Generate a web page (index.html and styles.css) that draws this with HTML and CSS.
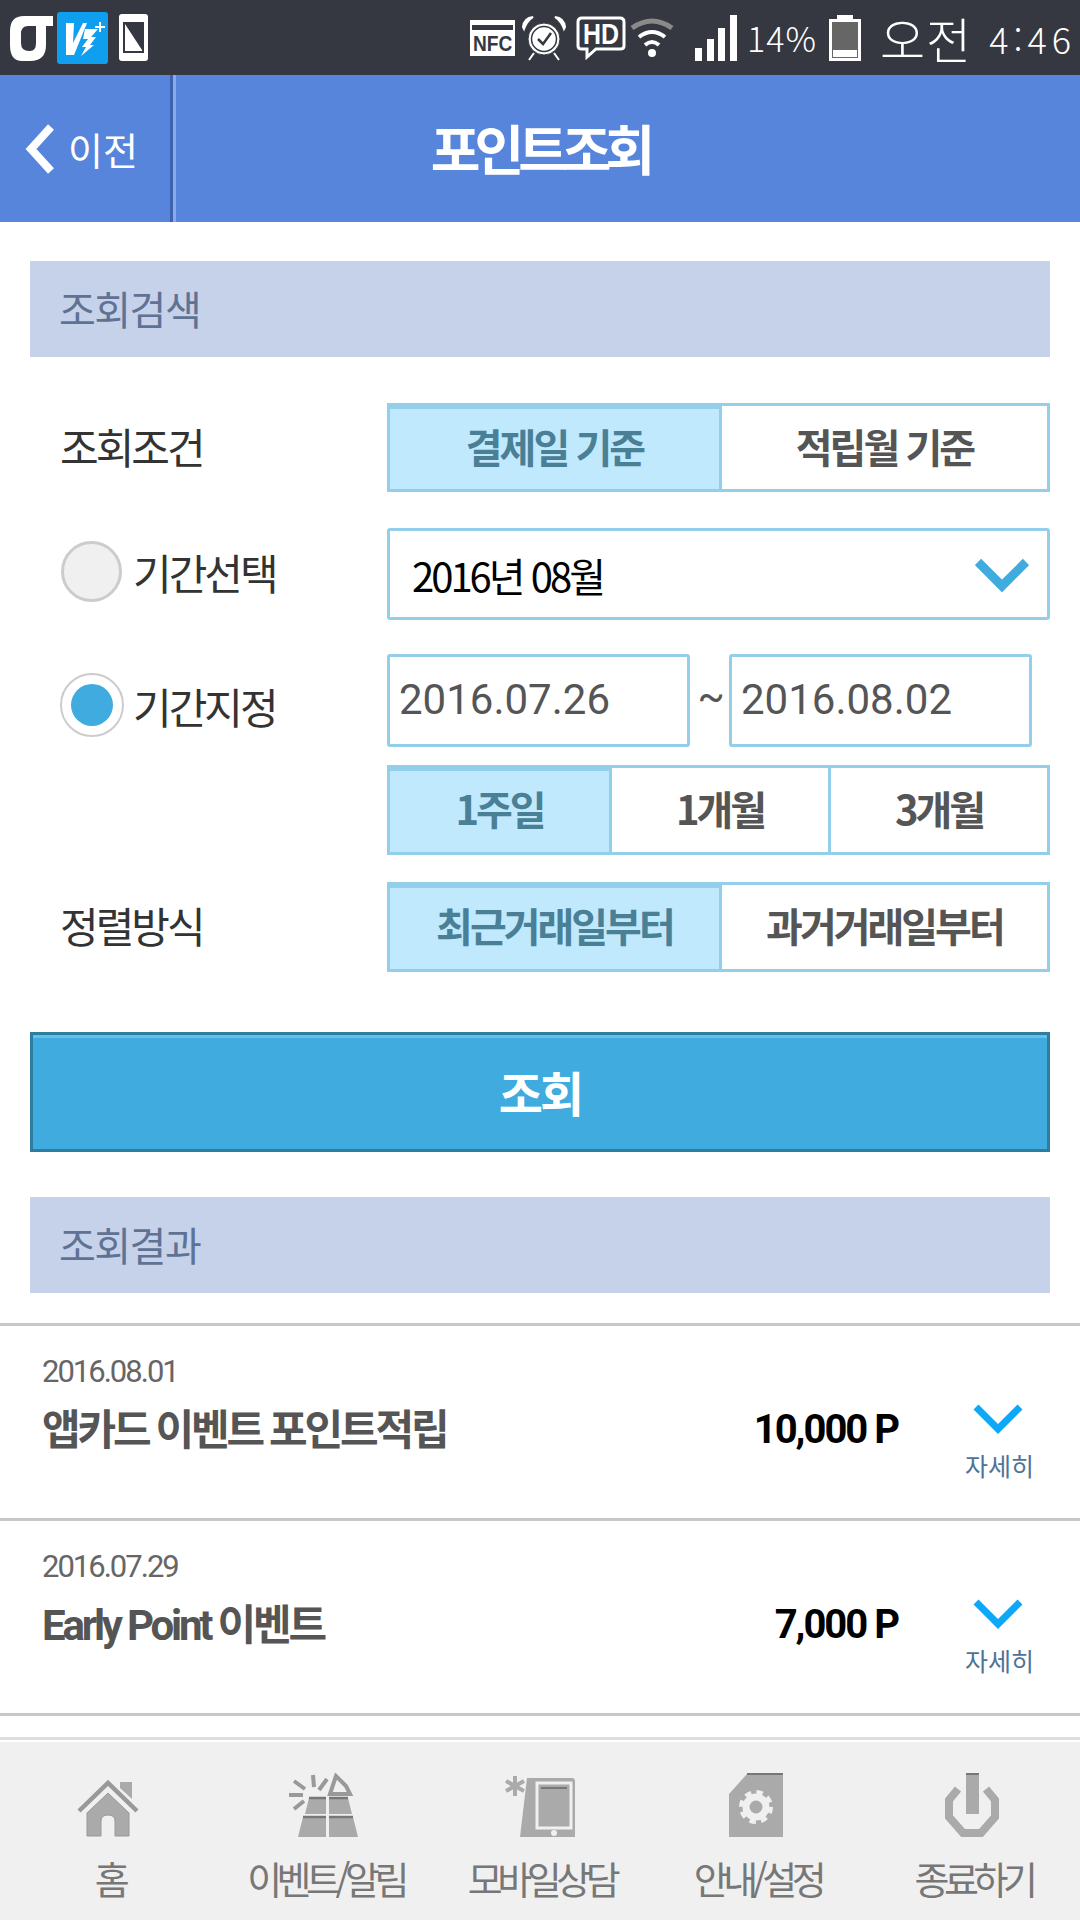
FILE: index.html
```html
<!DOCTYPE html>
<html lang="ko">
<head>
<meta charset="utf-8">
<title>포인트조회</title>
<link rel="stylesheet" href="styles.css">
</head>
<body>
<div class="page">
  <div class="status">
    <div class="status-left">
      <svg class="i-g" viewBox="0 0 43 46"><path fill="#fff" fill-rule="evenodd" d="M14 1H43V11H36V30Q36 46 20 46H12Q0 46 0 30V16Q0 1 14 1ZM18 11Q11 11 11 19V28Q11 36 19 36H20Q26 36 26 28V11Z"/></svg>
      <svg class="i-v" viewBox="0 0 51 52"><rect width="51" height="52" rx="3" fill="#109fee"/><path fill="#fff" d="M9 11H17L16 31L26 11H30L17 43H9Z"/><path fill="#fff" d="M28 17H41L34 25H39L33 33H37L24 44L29 35H25L31 27H26Z"/><path stroke="#fff" stroke-width="2" d="M38 15H48M43 10V20"/></svg>
      <svg class="i-phone" viewBox="0 0 29 47"><rect width="29" height="47" rx="3" fill="#fff"/><rect x="4" y="8" width="21" height="31" fill="#353841"/><path fill="#fff" d="M6 10L23 36V37H6Z"/></svg>
    </div>
    <div class="status-right">
      <svg class="i-nfc" viewBox="0 0 45 36"><rect width="45" height="36" fill="#fff"/><rect x="2" y="5" width="41" height="5" fill="#353841"/><text transform="translate(3 30.5) scale(.87 1)" class="nfc-text">NFC</text></svg>
      <svg class="i-alarm" viewBox="0 0 46 46"><circle cx="23" cy="24" r="16" fill="#fff" stroke="#353841" stroke-width="1"/><circle cx="23" cy="24" r="12.5" fill="#fff" stroke="#353841" stroke-width="1.5"/><path d="M17 24L22 29L30 18" fill="none" stroke="#353841" stroke-width="2.5"/><path d="M2 12Q3 3 12 2Q6 6 3 14Z M44 12Q43 3 34 2Q40 6 43 14Z" fill="#fff" stroke="#fff" stroke-width="2"/><path d="M13 38L8 45M33 38L38 45" stroke="#fff" stroke-width="2"/></svg>
      <svg class="i-hd" viewBox="0 0 50 44"><path d="M6 2H44Q48 2 48 6V30Q48 33 44 33H20L11 41V33H6Q2 33 2 30V6Q2 2 6 2Z" fill="none" stroke="#fff" stroke-width="3"/><text x="7" y="28" textLength="36" lengthAdjust="spacingAndGlyphs" class="hd-text">HD</text></svg>
      <svg class="i-wifi" viewBox="0 0 44 40"><path d="M2 10Q22 -4 42 10" fill="none" stroke="#8a8a8a" stroke-width="5"/><path d="M9 19Q22 9 35 19M15 27Q22 21 29 27" fill="none" stroke="#fff" stroke-width="4"/><circle cx="22" cy="35" r="4" fill="#fff"/></svg>
      <svg class="i-signal" viewBox="0 0 42 46"><path fill="#fff" d="M0 33H7V46H0ZM12 24H19V46H12ZM23 13H30V46H23ZM35 0H42V46H35Z"/></svg>
      <span class="pct">14%</span>
      <svg class="i-batt" viewBox="0 0 32 46"><path fill="#fff" d="M8 0H24V4H32V46H0V4H8Z"/><rect x="3" y="7" width="26" height="36" fill="#666"/><rect x="4" y="35" width="24" height="7" fill="#fff"/></svg>
      <span class="ampm">오전</span>
      <span class="clock">4:46</span>
    </div>
  </div>

  <header class="topbar">
    <div class="back">
      <svg class="i-back" viewBox="0 0 30 50"><path d="M26 3L6 25L26 47" fill="none" stroke="#fff" stroke-width="8"/></svg>
      <span>이전</span>
    </div>
    <h1 class="title">포인트조회</h1>
  </header>

  <main class="content">
    <div class="bar bar-search">조회검색</div>

    <div class="form-row row-cond">
      <div class="label">조회조건</div>
      <div class="seg">
        <div class="cell on grow-272">결제일 기준</div>
        <div class="cell grow-269">적립월 기준</div>
      </div>
    </div>

    <div class="form-row row-select">
      <div class="label with-radio"><span class="radio"></span>기간선택</div>
      <div class="select">
        <span class="select-value">2016년 08월</span>
        <svg class="i-sel" viewBox="0 0 54 35"><path d="M3 5L27 29L51 5" fill="none" stroke="#3fabde" stroke-width="9"/></svg>
      </div>
    </div>

    <div class="form-row row-date">
      <div class="label with-radio"><span class="radio active"><span class="dot"></span></span>기간지정</div>
      <div class="dates">
        <div class="date">2016.07.26</div>
        <div class="tilde">~</div>
        <div class="date">2016.08.02</div>
      </div>
    </div>

    <div class="form-row row-period">
      <div class="label"></div>
      <div class="seg">
        <div class="cell on">1주일</div>
        <div class="cell">1개월</div>
        <div class="cell">3개월</div>
      </div>
    </div>

    <div class="form-row row-sort">
      <div class="label">정렬방식</div>
      <div class="seg">
        <div class="cell on grow-272">최근거래일부터</div>
        <div class="cell grow-269">과거거래일부터</div>
      </div>
    </div>

    <button class="submit">조회</button>

    <div class="bar bar-result">조회결과</div>
  </main>

  <ul class="list">
    <li class="item">
      <div class="item-text">
        <div class="item-date">2016.08.01</div>
        <div class="item-name">앱카드 이벤트 포인트적립</div>
      </div>
      <div class="item-amount">10,000 P</div>
      <div class="more">
        <svg class="i-more" viewBox="0 0 50 31"><path d="M3 3L25 25L47 3" fill="none" stroke="#0ea8f8" stroke-width="7"/></svg>
        <span>자세히</span>
      </div>
    </li>
    <li class="item">
      <div class="item-text">
        <div class="item-date">2016.07.29</div>
        <div class="item-name">Early Point 이벤트</div>
      </div>
      <div class="item-amount">7,000 P</div>
      <div class="more">
        <svg class="i-more" viewBox="0 0 50 31"><path d="M3 3L25 25L47 3" fill="none" stroke="#0ea8f8" stroke-width="7"/></svg>
        <span>자세히</span>
      </div>
    </li>
  </ul>

  <nav class="tabs">
    <div class="tab">
      <svg class="tab-icon" viewBox="0 0 72 66"><path fill="#aaa" d="M48 9H60V26L48 15Z"/><path d="M7 38L36 10L65 38" fill="none" stroke="#999" stroke-width="4.5"/><path fill="#aaa" stroke="#999" d="M15 40L36 20L57 40V63H43V48Q43 42 36 42Q29 42 29 48V63H15Z"/></svg>
      <span class="tab-label">홈</span>
    </div>
    <div class="tab">
      <svg class="tab-icon" viewBox="0 0 72 66"><path fill="#aaa" d="M21 25H38V41H17ZM41 25H60L64 41H41ZM15 44H38V64H10ZM41 44H65L70 64H41Z"/><path d="M21 25H38M41 25H60M15 44H38M41 44H65" stroke="#777" stroke-width="2.5"/><path d="M25 2L26 14M6 8L17 16M1 22H15M6 36L16 28M39 6L31 17" stroke="#999" stroke-width="4"/><path d="M48 3L42 21H62L58 13Z" fill="none" stroke="#999" stroke-width="4"/></svg>
      <span class="tab-label">이벤트/알림</span>
    </div>
    <div class="tab">
      <svg class="tab-icon" viewBox="0 0 72 66"><path fill="#aaa" d="M23 5H68Q71 5 71 8V64H16Z"/><rect x="33" y="10" width="34" height="45" fill="none" stroke="#f0f0f0" stroke-width="3"/><rect x="37" y="14" width="26" height="37" fill="#aaa"/><path d="M37 15H63" stroke="#777" stroke-width="2"/><circle cx="50" cy="60" r="3" fill="#f0f0f0"/><path d="M11 3V23M2 8L20 18M20 8L2 18" stroke="#aaa" stroke-width="4"/></svg>
      <span class="tab-label">모바일상담</span>
    </div>
    <div class="tab">
      <svg class="tab-icon" viewBox="0 0 72 66"><path fill="#aaa" d="M27 1H63V64H9V21Z"/><path d="M27 1H63" stroke="#777" stroke-width="2"/><circle cx="36" cy="34" r="14" fill="none" stroke="#f0f0f0" stroke-width="6" stroke-dasharray="6 5"/><circle cx="36" cy="34" r="10" fill="#aaa" stroke="#f0f0f0" stroke-width="7"/></svg>
      <span class="tab-label">안내/설정</span>
    </div>
    <div class="tab">
      <svg class="tab-icon" viewBox="0 0 72 66"><path d="M22 16L13 27V44L27 60H45L59 44V27L50 16" fill="none" stroke="#aaa" stroke-width="8"/><rect x="30" y="0" width="13" height="41" fill="#aaa"/><path d="M30 1H43" stroke="#777" stroke-width="2"/></svg>
      <span class="tab-label">종료하기</span>
    </div>
  </nav>
</div>
</body>
</html>
```
FILE: styles.css
```css
* { box-sizing: border-box; }
html, body { margin: 0; padding: 0; }
body { font-family: "Noto Sans CJK KR", "Noto Sans", sans-serif; background: #fff; }
.page { width: 1080px; height: 1920px; display: flex; flex-direction: column; overflow: hidden; background: #fff; }

.status { height: 75px; flex: none; background: #353841; display: flex; justify-content: space-between; align-items: center; color: #fff; padding: 0 4px 0 10px; }
.status-left, .status-right { display: flex; align-items: center; }
.i-g { width: 43px; height: 46px; }
.i-v { width: 51px; height: 52px; margin-left: 4px; }
.i-phone { width: 31px; height: 47px; margin-left: 10px; }
.i-nfc { width: 45px; height: 36px; }
.i-alarm { width: 46px; height: 46px; margin-left: 6px; }
.i-hd { width: 50px; height: 44px; margin-left: 9px; }
.i-wifi { width: 44px; height: 40px; margin-left: 4px; }
.i-signal { width: 42px; height: 46px; margin-left: 21px; }
.i-batt { width: 32px; height: 46px; margin-left: 16px; }
.nfc-text { font: 700 22px "Liberation Sans", sans-serif; fill: #353841; }
.hd-text { font: 700 30px "Liberation Sans", sans-serif; fill: #fff; }
.pct { font: 300 34px "Noto Sans CJK KR", sans-serif; margin-left: 10px; letter-spacing: 1px; width: 66px; }
.ampm { font: 300 49px "Noto Sans CJK KR", sans-serif; margin-left: 19px; letter-spacing: 1px; }
.clock { font: 300 36px "Noto Sans CJK KR", sans-serif; margin-left: 17px; letter-spacing: 5px; }

.topbar { height: 147px; flex: none; background: #5785db; display: flex; color: #fff; }
.back { width: 176px; flex: none; display: flex; align-items: center; gap: 13px; padding-left: 25px; border-right: 3px solid #8aa9e8; box-shadow: inset -3px 0 0 #3d64ae; font-size: 38px; }
.i-back { width: 30px; height: 50px; flex: none; }
.title { flex: 1; margin: 0; padding-right: 176px; text-align: center; font-size: 54px; line-height: 145px; font-weight: 700; letter-spacing: -6px; }

.content { flex: none; padding: 0 30px; display: flex; flex-direction: column; }
.bar { height: 96px; background: #c5d2ea; color: #5f7293; font-size: 40px; line-height: 94px; padding-left: 29px; letter-spacing: -1.5px; }
.bar-search { margin-top: 39px; }
.bar-result { margin-top: 45px; }

.form-row { display: flex; align-items: center; }
.row-cond { margin-top: 46px; height: 89px; }
.row-select { margin-top: 36px; height: 92px; }
.row-date { margin-top: 34px; height: 93px; }
.row-period { margin-top: 18px; height: 90px; }
.row-sort { margin-top: 27px; height: 90px; }
.label { width: 357px; flex: none; padding: 0 0 5px 30px; color: #333; font-size: 42px; letter-spacing: -3px; display: flex; align-items: center; }
.with-radio { padding-left: 31px; gap: 11px; }
.row-select .label { padding-bottom: 5px; }
.row-date .label { padding-top: 9px; padding-bottom: 0; }
.radio { width: 61px; height: 61px; flex: none; border-radius: 50%; background: #f0f0f0; border: 3px solid #ccc; display: flex; align-items: center; justify-content: center; }
.radio.active { background: #fff; border-width: 2px; width: 64px; height: 64px; margin: 0 -1.5px; }
.dot { width: 42px; height: 42px; border-radius: 50%; background: #3fabde; }

.seg { flex: 1; height: 100%; display: flex; border: 3px solid #93cfe8; background: #fff; }
.cell { flex: 1; display: flex; align-items: center; justify-content: center; padding-bottom: 4px; color: #555; font-size: 40px; font-weight: 700; letter-spacing: -3px; border-left: 3px solid #93cfe8; }
.cell:first-child { border-left: 0; }
.row-period .cell:first-child { flex: 1.014; }
.cell.on { background: #c1e9fe; color: #4a8096; box-shadow: inset 0 3px 0 #93cfe8; }
.grow-272 { flex: 272; }
.grow-269 { flex: 269; }

.select { flex: 1; height: 100%; display: flex; align-items: center; justify-content: space-between; border: 3px solid #93cfe8; border-radius: 3px; padding: 0 18px 0 22px; color: #000; font-size: 40px; letter-spacing: -3px; }
.select-value { padding-top: 2px; }
.i-sel { width: 54px; height: 35px; flex: none; }
.dates { flex: 1; height: 100%; display: flex; align-items: stretch; padding-right: 18px; }
.date { width: 303px; border: 3px solid #93cfe8; border-radius: 3px; padding-left: 9px; color: #555; font: 400 42px/85px Roboto, sans-serif; }
.tilde { width: 39px; padding-left: 3px; text-align: center; color: #555; font: 400 40px/85px Roboto, sans-serif; }

.submit { margin: 60px 0 0; height: 120px; width: 100%; padding: 0 0 2px; background: #3fabde; border: 3px solid #2e7d9f; box-shadow: inset 0 3px 0 #62c0ea; color: #fff; font-family: inherit; font-size: 48px; font-weight: 700; letter-spacing: -3px; }

.list { list-style: none; margin: 30px 0 0; padding: 0; border-bottom: 3px solid #c8c8c8; }
.item { height: 195px; border-top: 3px solid #c8c8c8; display: flex; padding: 0 46px 0 42px; }
.item-text { flex: 1; padding-top: 23px; }
.item-date { font: 400 31px/46px Roboto, sans-serif; color: #666; letter-spacing: -2px; }
.item-name { font-family: Roboto, "Noto Sans CJK KR", sans-serif; font-size: 42px; line-height: 72px; font-weight: 700; color: #555; letter-spacing: -3.2px; }
.item-amount { font: 700 40px/208px Roboto, sans-serif; color: #000; letter-spacing: -2px; }
.more { width: 69px; margin-left: 67px; padding-top: 78px; display: flex; flex-direction: column; align-items: center; color: #4e7396; font-size: 25px; line-height: 34px; }
.i-more { width: 50px; height: 31px; flex: none; margin-bottom: 13px; margin-right: 3px; }

.tabs { margin-top: auto; height: 183px; flex: none; display: grid; grid-template-columns: repeat(5, 1fr); background: #f0f0f0; border-top: 3px solid #ddd; box-shadow: inset 0 2px 0 #fff; }
.tab { display: flex; flex-direction: column; align-items: center; padding-top: 33px; color: #777; font-size: 38px; line-height: 52px; letter-spacing: -5.5px; }
.tab-icon { width: 72px; height: 66px; flex: none; margin-bottom: 13px; }
.tab-label { padding-left: 3px; white-space: nowrap; }
```
